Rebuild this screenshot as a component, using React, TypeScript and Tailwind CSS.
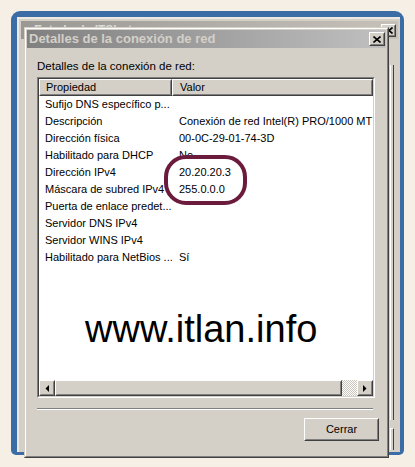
const rows: [string, string][] = [
  ["Sufijo DNS específico p...", ""],
  ["Descripción", "Conexión de red Intel(R) PRO/1000 MT #"],
  ["Dirección física", "00-0C-29-01-74-3D"],
  ["Habilitado para DHCP", "No"],
  ["Dirección IPv4", "20.20.20.3"],
  ["Máscara de subred IPv4", "255.0.0.0"],
  ["Puerta de enlace predet...", ""],
  ["Servidor DNS IPv4", ""],
  ["Servidor WINS IPv4", ""],
  ["Habilitado para NetBios ...", "Sí"],
];

function Raised({ className = "", children }: { className?: string; children?: React.ReactNode }) {
  return (
    <div className={`border border-t-white border-l-white border-r-[#404040] border-b-[#404040] bg-[#d4d0c8] ${className}`}>
      <div className="flex h-full w-full items-center justify-center border border-t-[#d4d0c8] border-l-[#d4d0c8] border-r-[#808080] border-b-[#808080]">
        {children}
      </div>
    </div>
  );
}

function CloseX() {
  return (
    <svg width="8" height="7" viewBox="0 0 8 7">
      <path d="M0.5 0.5 L7.5 6.5 M7.5 0.5 L0.5 6.5" stroke="black" strokeWidth="1.6" fill="none" />
    </svg>
  );
}

function Arrow({ dir }: { dir: "left" | "right" }) {
  return (
    <svg width="4" height="7" viewBox="0 0 4 7">
      {dir === "left" ? <polygon points="4,0 4,7 0.5,3.5" fill="black" /> : <polygon points="0,0 0,7 3.5,3.5" fill="black" />}
    </svg>
  );
}

function BackWindow() {
  return (
    <div className="absolute left-[11px] top-[11px] h-[444px] w-[393px] rounded-t-[9px] rounded-b-[5px] bg-[#3b6ca6] pb-[3px] pl-[6px] pr-[4px] pt-[6px]">
      <div className="relative flex h-full flex-col border-l-2 border-t-2 border-l-[#ece9e2] border-t-[#ece9e2] bg-[#d4d0c8] px-[2px] pt-[2px]">
        <div className="flex h-[18px] items-center bg-gradient-to-r from-[#9a9894] to-[#c6c2ba] pl-[4px] pr-[2px]">
          <div className="mr-[3px] h-[7px] w-[6px] border border-[#e8e4dc] bg-[#8a8a8a]" />
          <span className="text-[12px] font-bold text-[#dedad2]">Estado de ITShot</span>
          <Raised className="ml-auto h-[13px] w-[15px]">
            <CloseX />
          </Raised>
        </div>
        <div className="absolute left-[371px] top-[46px] h-[355px] w-[4px] border-l border-r border-l-white border-r-[#404040]" />
        <div className="absolute left-[371px] top-[409px] h-[22px] w-[4px] border-l border-r border-t border-l-white border-t-white border-r-[#404040]" />
      </div>
    </div>
  );
}

function ListBox() {
  return (
    <div className="mt-[4px] h-[321px] w-[338px] border border-t-[#808080] border-l-[#808080] border-r-white border-b-white">
      <div className="flex h-full flex-col overflow-hidden border border-t-[#404040] border-l-[#404040] border-r-[#d4d0c8] border-b-[#d4d0c8] bg-white">
        <div className="flex h-[17px] shrink-0">
          <Raised className="h-full w-[133px]">
            <span className="w-full pl-[5px] text-[11px]">Propiedad</span>
          </Raised>
          <Raised className="h-full flex-1">
            <span className="w-full pl-[6px] text-[11px]">Valor</span>
          </Raised>
        </div>
        {rows.map(([prop, val]) => (
          <div key={prop} className="flex h-[17px] shrink-0 items-center whitespace-nowrap text-[11px] text-black">
            <span className="w-[133px] shrink-0 overflow-hidden pl-[6px]">{prop}</span>
            <span className="pl-[7px]">{val}</span>
          </div>
        ))}
        <div className="flex-1" />
        <div className="flex h-[16px] shrink-0 bg-[#d4d0c8]">
          <Raised className="h-full w-[16px]">
            <Arrow dir="left" />
          </Raised>
          <Raised className="h-full flex-1" />
          <div className="h-full w-[15px] bg-[image:repeating-conic-gradient(#ffffff_0_25%,#c8c4bc_0_50%)] bg-[length:2px_2px]" />
          <Raised className="h-full w-[16px]">
            <Arrow dir="right" />
          </Raised>
        </div>
      </div>
    </div>
  );
}

function Dialog() {
  return (
    <div className="absolute left-[24px] top-[27px] h-[431px] w-[365px] border border-t-[#d4d0c8] border-l-[#d4d0c8] border-r-[#404040] border-b-[#404040] bg-[#d4d0c8]">
      <div className="flex h-full flex-col border border-t-white border-l-white border-r-[#808080] border-b-[#808080] p-px">
        <div className="flex h-[18px] shrink-0 items-center bg-gradient-to-r from-[#808080] to-[#c0c0c0] pl-[2px] pr-[1px]">
          <span className="text-[13px] font-bold text-[#d4d0c8]">Detalles de la conexión de red</span>
          <Raised className="ml-auto h-[14px] w-[16px]">
            <CloseX />
          </Raised>
        </div>
        <div className="flex flex-1 flex-col pl-[10px] pr-[9px] pt-[11px]">
          <p className="h-[14px] text-[11.5px] leading-[14px] text-black">Detalles de la conexión de red:</p>
          <ListBox />
          <div className="mt-[10px] h-[2px] w-[336px] border-b border-t border-b-white border-t-[#808080]" />
          <div className="mt-[8px] flex justify-end">
            <Raised className="-mr-[2px] h-[23px] w-[75px]">
              <span className="text-[11px] text-black">Cerrar</span>
            </Raised>
          </div>
        </div>
      </div>
    </div>
  );
}

export default function App() {
  return (
    <div className="relative h-[467px] w-[415px] overflow-hidden bg-[#f5efe6] font-['Liberation_Sans',Arial,sans-serif]">
      <BackWindow />
      <Dialog />
      <div className="absolute left-[164px] top-[155px] h-[50px] w-[83px] rounded-[22px] border-[4px] border-[#6b1c3d]" />
      <p className="absolute left-[85px] top-[310px] text-[38px] leading-none text-black">www.itlan.info</p>
    </div>
  );
}
